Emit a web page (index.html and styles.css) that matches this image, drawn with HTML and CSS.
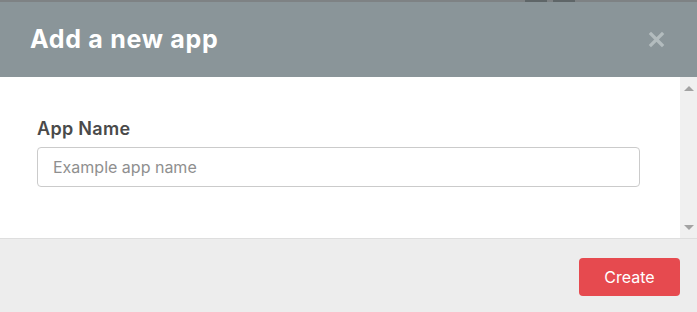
FILE: index.html
```html
<!DOCTYPE html>
<html lang="en">
<head>
    <meta charset="UTF-8">
    <meta name="viewport" content="width=device-width, initial-scale=1.0">
    <title>Add a new app</title>
    <link rel="stylesheet" href="styles.css">
</head>
<body>
    <div class="backdrop-strip">
        <span class="strip-bit bit-1"></span>
        <span class="strip-bit bit-2"></span>
    </div>
    <div class="modal">
        <div class="modal-header">
            <h2>Add a new app</h2>
            <button class="close" aria-label="Close">
                <svg width="17" height="17" viewBox="0 0 17 17">
                    <path d="M3 3 L14 14 M14 3 L3 14" stroke="#b3bcbe" stroke-width="3.2" stroke-linecap="square"/>
                </svg>
            </button>
        </div>

        <div class="modal-body">
            <div class="body-content">
                <label for="appName">App Name</label>
                <input type="text" id="appName" placeholder="Example app name">
            </div>
            <div class="scrollbar">
                <span class="arrow up"></span>
                <span class="arrow down"></span>
            </div>
        </div>

        <div class="modal-footer">
            <button class="create">Create</button>
        </div>
    </div>
</body>
</html>
```

FILE: styles.css
```css
body {
    margin: 0;
    padding: 0;
    font-family: Inter, "Open Sans", Arial, sans-serif;
    background: #ededed;
}

.backdrop-strip {
    height: 2px;
    background: #7e8284;
    position: relative;
}

.strip-bit {
    position: absolute;
    top: 0;
    height: 2px;
    background: #5f6668;
}
.bit-1 { left: 525px; width: 22px; }
.bit-2 { left: 553px; width: 22px; }

.modal {
    display: flex;
    flex-direction: column;
    height: 310px;
}

.modal-header {
    background: #8a9599;
    height: 75px;
    display: flex;
    align-items: center;
    justify-content: space-between;
    padding: 0 30px;
}

.modal-header h2 {
    margin: 0 0 1px;
    color: #fff;
    font-size: 25px;
    font-weight: 700;
    letter-spacing: 0.7px;
}

.close {
    background: none;
    border: none;
    padding: 0;
    margin-right: 2px;
    width: 17px;
    height: 17px;
    cursor: pointer;
}

.modal-body {
    background: #fff;
    height: 161px;
    display: flex;
    border-bottom: 1px solid #dedede;
}

.body-content {
    flex: 1;
    padding: 41px 40px 0 37px;
}

label {
    display: block;
    color: #4a4a4a;
    font-size: 18px;
    font-weight: 600;
    letter-spacing: 0.3px;
    margin-bottom: 8px;
}

input {
    box-sizing: border-box;
    width: 100%;
    height: 40px;
    border: 1px solid #cbcbcb;
    border-radius: 4px;
    padding: 0 15px;
    font-family: inherit;
    font-size: 16px;
    color: #333;
}

input::placeholder {
    color: #8f8f8f;
}

.scrollbar {
    width: 17px;
    background: #f0f0f0;
    position: relative;
}

.arrow {
    position: absolute;
    left: 4px;
    width: 0;
    height: 0;
    border-left: 5px solid transparent;
    border-right: 5px solid transparent;
}
.arrow.up { top: 9px; border-bottom: 5px solid #a3a3a3; }
.arrow.down { bottom: 8px; border-top: 5px solid #a3a3a3; }

.modal-footer {
    flex: 1;
    background: #ededed;
    display: flex;
    justify-content: flex-end;
    align-items: flex-start;
    padding: 19px 17px 0 0;
}

.create {
    background: #e64a4f;
    color: #fff;
    border: none;
    border-radius: 4px;
    width: 101px;
    height: 38px;
    font-family: inherit;
    font-size: 16px;
    cursor: pointer;
}
```
